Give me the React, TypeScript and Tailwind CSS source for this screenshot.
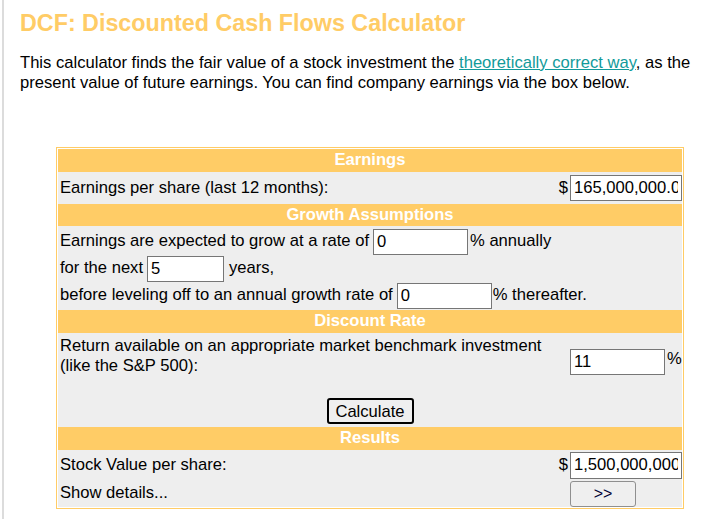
import React from 'react';

const Header: React.FC<{ title: string; h: string }> = ({ title, h }) => (
  <div className={`${h} bg-[#ffcc66] flex items-center justify-center text-white font-bold`}>{title}</div>
);

const inputCls = 'h-[26px] border border-[#767676] bg-white px-[3px] text-[16.6px] text-black outline-none';

const App: React.FC = () => {
  return (
    <div className="min-h-[519px] bg-white font-['Liberation_Sans',Arial,sans-serif] text-[16.6px] text-black">
      <div className="ml-[2px] min-h-[519px] border-l-2 border-[#dcdcdc] pl-[16px] pr-[6px] pt-[8px]">
        <h1 className="text-[23.3px] leading-[30px] font-bold text-[#ffcc66]">DCF: Discounted Cash Flows Calculator</h1>
        <p className="mt-[15px] leading-[20px]">
          This calculator finds the fair value of a stock investment the{' '}
          <a href="#" className="text-[#119a9a] underline">theoretically correct way</a>, as the
          <br />
          present value of future earnings. You can find company earnings via the box below.
        </p>

        {/* Calculator table */}
        <div className="mt-[54px] ml-[36px] w-[628px] border border-[#ffcc66] p-px">
          <Header title="Earnings" h="h-[23px]" />
          <div className="h-[32px] bg-[#eeeeee] grid grid-cols-[1fr_14px_112px] items-center">
            <span className="pl-[2px]">Earnings per share (last 12 months):</span>
            <span className="text-right pr-[2px]">$</span>
            <input className={`${inputCls} w-[112px]`} defaultValue="165,000,000.00" />
          </div>

          <Header title="Growth Assumptions" h="h-[22px]" />
          <div className="h-[84px] bg-[#eeeeee] pl-[2px] pt-[2px]">
            <div className="h-[27px] flex items-center">
              <span>Earnings are expected to grow at a rate of</span>
              <input className={`${inputCls} ml-[4px] w-[95px] h-[25px]`} defaultValue="0" />
              <span className="ml-[2px]">% annually</span>
            </div>
            <div className="h-[27px] flex items-center">
              <span>for the next</span>
              <input className={`${inputCls} ml-[4px] w-[77px]`} defaultValue="5" />
              <span className="ml-[5px]">years,</span>
            </div>
            <div className="h-[27px] flex items-center">
              <span>before leveling off to an annual growth rate of</span>
              <input className={`${inputCls} ml-[4px] w-[95px] h-[25px]`} defaultValue="0" />
              <span className="ml-[1px]">% thereafter.</span>
            </div>
          </div>

          <Header title="Discount Rate" h="h-[23px]" />
          <div className="h-[64px] bg-[#eeeeee] grid grid-cols-[1fr_14px_112px]">
            <span className="pl-[2px] pt-[3px] leading-[20px]">
              Return available on an appropriate market benchmark investment
              <br />
              (like the S&amp;P 500):
            </span>
            <span />
            <div className="pt-[16px] flex items-start">
              <input className={`${inputCls} w-[95px]`} defaultValue="11" />
              <span className="ml-[2px] leading-[20px]">%</span>
            </div>
          </div>
          <div className="h-[30px] bg-[#eeeeee] flex justify-center pt-px">
            <button className="h-[26px] w-[87px] rounded-[3px] border-2 border-black bg-[#efefef] text-[16.6px]">Calculate</button>
          </div>

          <Header title="Results" h="h-[23px]" />
          <div className="h-[30px] bg-[#eeeeee] grid grid-cols-[1fr_14px_112px] items-center">
            <span className="pl-[2px]">Stock Value per share:</span>
            <span className="text-right pr-[2px]">$</span>
            <input className={`${inputCls} w-[112px] h-[27px]`} defaultValue="1,500,000,000.00" />
          </div>
          <div className="h-[27px] bg-[#eeeeee] grid grid-cols-[1fr_14px_112px] items-center">
            <span className="pl-[2px]">Show details...</span>
            <span />
            <button className="h-[26px] w-[66px] rounded-[3px] border border-[#8f8f8f] bg-[#efefef] text-[16px] text-[#000033] leading-none">&gt;&gt;</button>
          </div>
        </div>
      </div>
    </div>
  );
};

export default App;
